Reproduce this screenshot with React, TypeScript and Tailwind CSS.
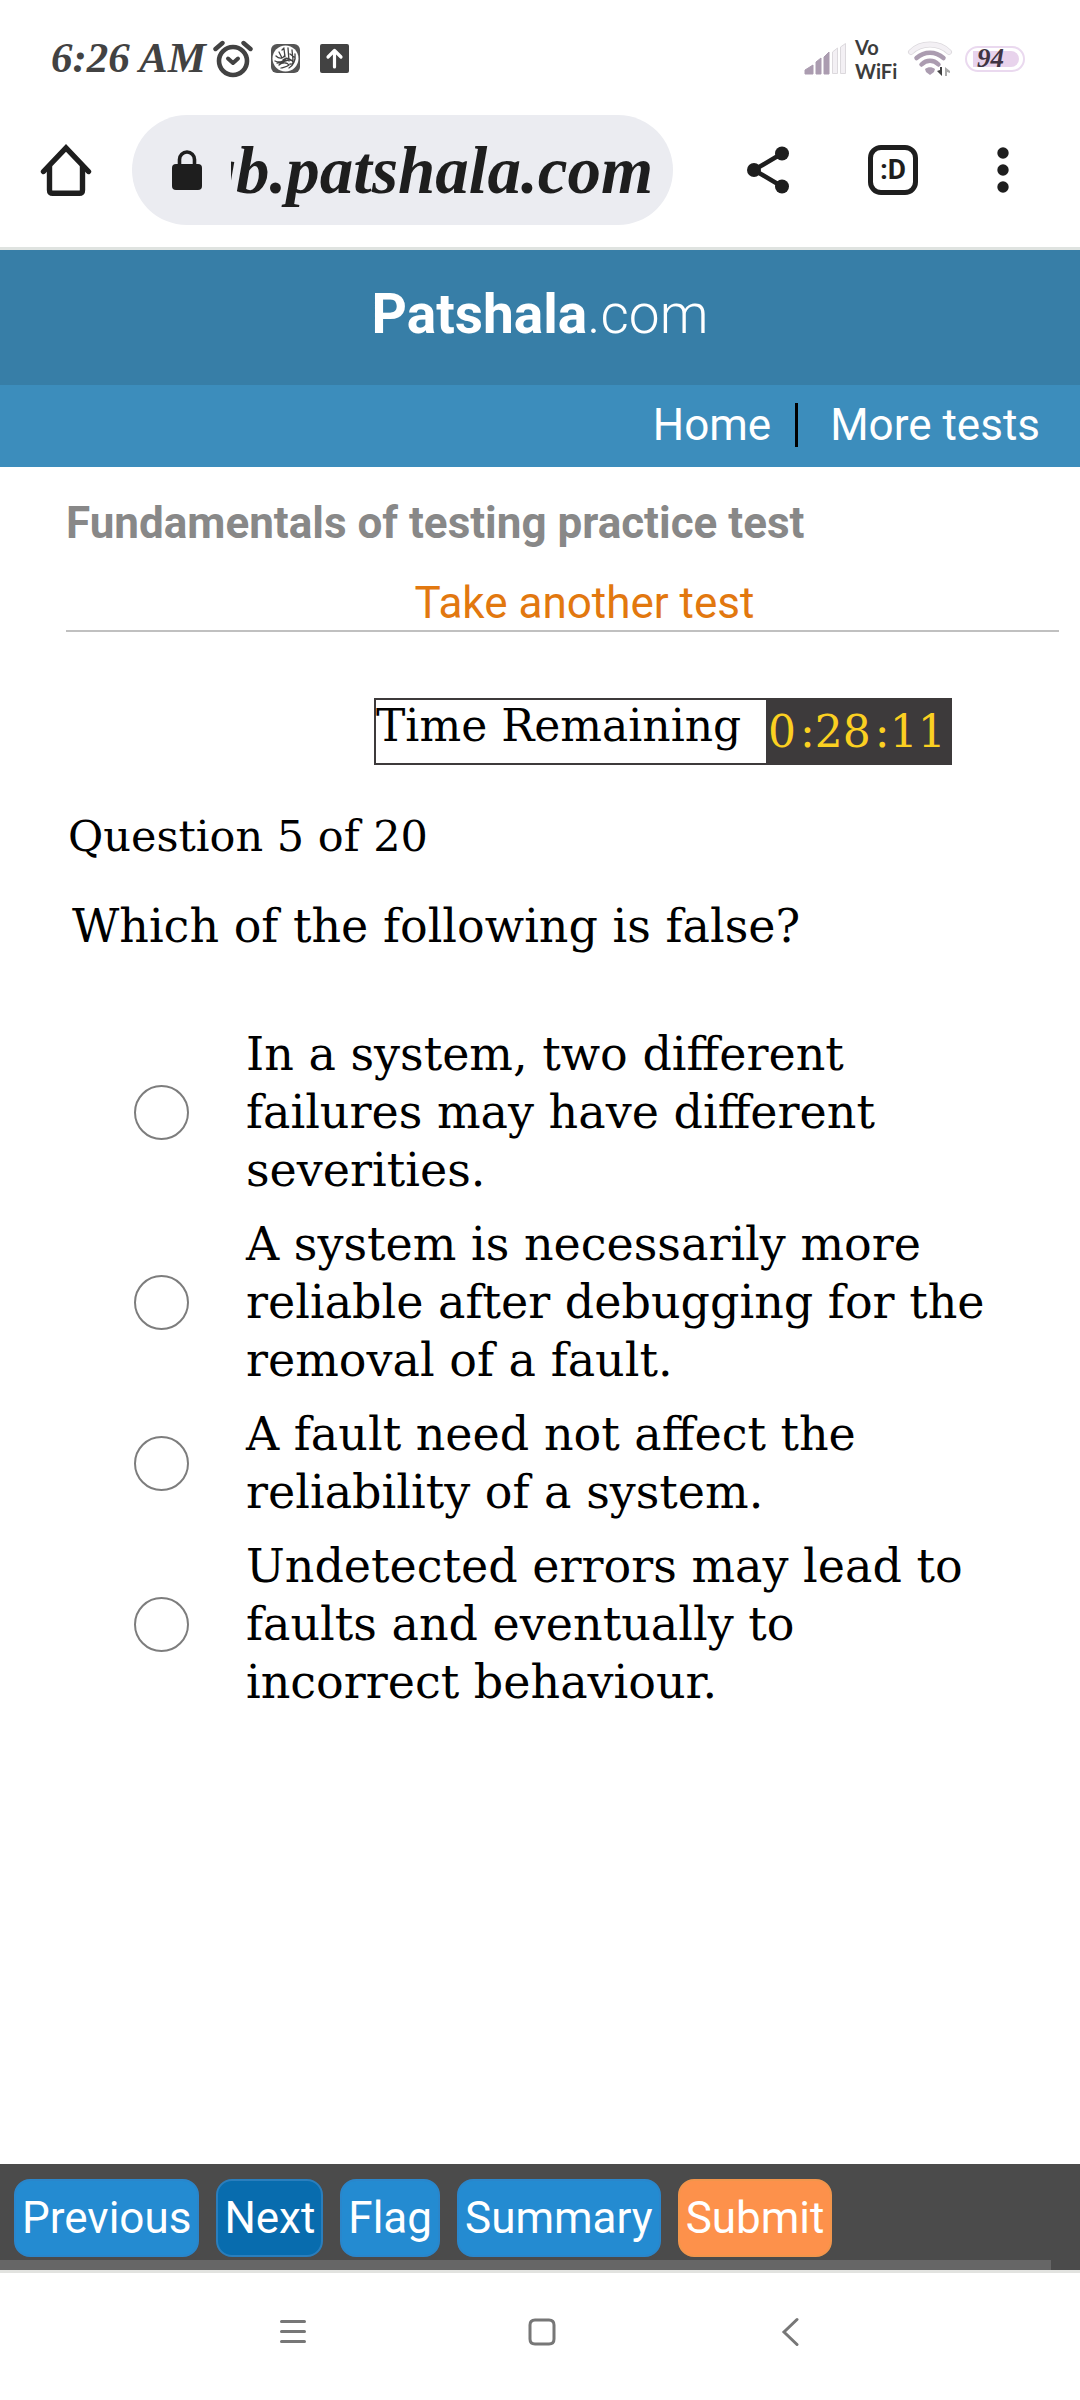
import React from "react";

const options = [
  "In a system, two different failures may have different severities.",
  "A system is necessarily more reliable after debugging for the removal of a fault.",
  "A fault need not affect the reliability of a system.",
  "Undetected errors may lead to faults and eventually to incorrect behaviour.",
];

function StatusBar() {
  return (
    <div className="flex h-[115px] items-center pl-[51px] pr-[55px] pt-0.5 text-[#424242]">
      <span className="w-[162px] whitespace-nowrap font-['Liberation_Serif',serif] text-[43px] font-bold italic">
        6:26 AM
      </span>
      <svg width="40" height="38" viewBox="0 0 40 38" fill="none" stroke="currentColor">
        <circle cx="20" cy="21" r="14" strokeWidth="4.6" />
        <path d="M2.5 9 L9.500 3 M37.5 9 L30.500 3" strokeWidth="4.400" strokeLinecap="round" />
        <path d="M15 18.5 L20 23 L25 18.500" strokeWidth="4" strokeLinecap="round" strokeLinejoin="round" />
      </svg>
      <svg className="ml-[18px]" width="29" height="29" viewBox="0 0 29 29" fill="none" stroke="currentColor">
        <rect width="29" height="29" rx="6" fill="#555" stroke="none" />
        <circle cx="14.500" cy="14.500" r="13" fill="#fff" stroke="none" />
        <path
          d="M4 17c4 2 9 1 12-3M5 12c3 3 7 3 9-1M8 8l3 6M13 5l1 8M17 4l1 13M21 6l1 10M24 10c1 6-2 12-6 14M8 21c3-3 8-3 10 0M10 24c3-1 6-1 8-3M6 19c5 0 9-3 13-3s4 5 0 4M12 16c2-2 6-2 8 0M11 6l2-2M19 10l4 3"
          strokeWidth="1.300"
          strokeLinecap="round"
        />
      </svg>
      <svg className="ml-5" width="29" height="29" viewBox="0 0 29 29">
        <rect width="29" height="29" rx="2" fill="#424242" />
        <path d="M14.500 23V7M8 13l6.500-6.500L21 13" stroke="#fff" strokeWidth="3.200" fill="none" strokeLinecap="round" strokeLinejoin="round" />
      </svg>
      <div className="ml-auto flex items-center">
        <svg width="44" height="34" viewBox="0 0 44 34">
          <path d="M1 32v-4l8-5v9zM12 32V20l5-4v16zM20 32V15l5-5v22z" fill="#ab9cb0" stroke="#ab9cb0" strokeLinejoin="round" />
          <path d="M28.500 31.500V10l5-4v25.500zM36.500 31.500V5l5-3.500v30z" fill="#f3f0f4" stroke="#dcd9dd" />
        </svg>
        <div className="ml-[7px] flex w-[46px] flex-col font-['Lato',sans-serif] text-[20px] font-bold leading-[24px] text-[#3c3c3c]">
          <span>Vo</span>
          <span>WiFi</span>
        </div>
        <svg className="ml-[6px]" width="46" height="38" viewBox="0 0 46 38" fill="none">
          <path d="M4 12c10-10 28-10 38 0" stroke="#dcd9dd" strokeWidth="6" strokeLinecap="round" />
          <path d="M4 12c10-10 28-10 38 0" stroke="#f3f0f4" strokeWidth="4.500" strokeLinecap="round" />
          <path d="M9.500 18c8-7 19-7 27 0M14.500 24.500c5-5 12-5 17 0" stroke="#ab9cb0" strokeWidth="4.500" strokeLinecap="round" />
          <path d="M18 29c3-2.500 7-2.500 10 0l-1 3-4 3-4-3z" fill="#ab9cb0" />
          <path d="M35 27v9l-5-5 3-1v-3z" fill="#424242" />
          <path d="M38 36v-9l5 4v2l-3-1v4z" fill="#aaa" />
        </svg>
        <div className="ml-3 flex h-[26px] w-[60px] items-center rounded-full border-2 border-[#ead9ef] py-1 pl-1.5 pr-1">
          <div className="flex h-4 w-full items-center rounded-r-full bg-[#e8d3ec] pl-1 font-['Liberation_Serif',serif] text-[27px] font-bold italic text-[#3f3442]">
            94
          </div>
        </div>
      </div>
    </div>
  );
}

function BrowserBar() {
  return (
    <div className="flex h-[110px] items-center pl-[40px] pr-[71px] text-[#1e1e1e]">
      <button aria-label="Home page" className="shrink-0">
        <svg width="52" height="54" viewBox="0 0 52 54" fill="none" stroke="currentColor" strokeWidth="5.400">
          <path d="M3.500 28.500 L26 5 L48.500 28.500" strokeLinecap="round" />
          <path d="M9.500 23v24q0 3.300 3.300 3.300h26.400q3.300 0 3.300-3.300V23" />
        </svg>
      </button>
      <div className="ml-10 flex h-full min-w-0 flex-1 items-center rounded-full bg-[#ebecf1] pl-10 pr-[20px]">
        <svg className="shrink-0" width="30" height="41" viewBox="0 0 30 41">
          <rect y="14" width="30" height="26" rx="4" fill="currentColor" />
          <path d="M7.500 16V9.500a7.500 7.500 0 0 1 15 0V16" fill="none" stroke="currentColor" strokeWidth="3.600" />
        </svg>
        <div className="ml-[29px] flex min-w-0 flex-1 justify-end overflow-hidden">
          <input
            aria-label="Address"
            defaultValue="qb.patshala.com"
            className="w-[480px] shrink-0 bg-transparent text-right font-['Liberation_Serif',serif] text-[67px] font-bold italic leading-[80px] outline-none"
          />
        </div>
      </div>
      <button aria-label="Share" className="ml-[74px] shrink-0">
        <svg width="42" height="48" viewBox="0 0 42 48" fill="currentColor">
          <path d="M35 7.500 L7 24 L35 40.500" fill="none" stroke="currentColor" strokeWidth="4.500" />
          <circle cx="7" cy="24" r="7" />
          <circle cx="35" cy="7.500" r="7" />
          <circle cx="35" cy="40.500" r="7" />
        </svg>
      </button>
      <button
        aria-label="Tabs"
        className="ml-[79px] flex size-[50px] shrink-0 items-center justify-center rounded-[13px] border-[5px] border-current font-['Roboto',sans-serif] text-[28px] font-bold"
      >
        :D
      </button>
      <button aria-label="Menu" className="ml-[79px] shrink-0">
        <svg width="12" height="46" viewBox="0 0 12 46" fill="currentColor">
          <circle cx="6" cy="6" r="5.700" />
          <circle cx="6" cy="23" r="5.700" />
          <circle cx="6" cy="40" r="5.700" />
        </svg>
      </button>
    </div>
  );
}

const button = "h-[78px] rounded-2xl border-2 px-1.5";

export default function App() {
  return (
    <div className="flex min-h-screen flex-col bg-white">
      <StatusBar />
      <BrowserBar />
      <header className="mt-[22px] border-t-[3px] border-[#dfe3e0] font-['Roboto',sans-serif] text-white">
        <div className="flex h-[135px] justify-center bg-[#377ea7] pt-[30px] text-[55px] leading-[68px]">
          <a href="#home">
            <b className="font-bold">Patshala</b>
            <span className="font-light">.com</span>
          </a>
        </div>
        <nav className="flex h-[82px] items-start justify-end bg-[#3c8dbc] pr-[40px] pt-[18px] text-[44px]">
          <a href="#home" className="border-r-[3px] border-black pr-6 leading-[44px]">
            Home
          </a>
          <a href="#tests" className="pl-8 leading-[44px]">
            More tests
          </a>
        </nav>
      </header>

      <main className="flex-1 pl-[66px] pr-[21px] font-['DejaVu_Serif',serif] text-[46px] leading-[58px] text-black">
        <div className="border-b-2 border-[#c0c0c0] pt-[26px] font-['Roboto',sans-serif] text-[44px]">
          <h1 className="font-bold leading-[60px] text-[#888]">Fundamentals of testing practice test</h1>
          <div className="mt-[23px] pl-[44px] text-center leading-[54px] text-[#e2780f]">
            <a href="#another">Take another test</a>
          </div>
        </div>

        <div className="mt-[66px] flex justify-end pr-[107px]">
          <div className="flex h-[67px] w-[578px] border-2 border-[#3d3a3b] bg-[#3d3a3b]">
            <span className="w-[390px] shrink-0 whitespace-nowrap bg-white text-[44px] leading-[52px]">Time Remaining</span>
            <span className="flex flex-1 items-center pl-0.5 text-[44px] text-[#fbd021]">
              0<span className="ml-1">:28</span>
              <span className="ml-1">:11</span>
            </span>
          </div>
        </div>

        <p className="mt-[42px] pl-0.5 text-[43px]">Question 5 of 20</p>
        <form>
          <fieldset>
            <legend className="pl-1.5 pt-8">Which of the following is false?</legend>
            <div className="mt-[70px] flex flex-col gap-4 pl-[68px] pr-[50px]">
              {options.map((o) => (
                <label key={o} className="flex items-center gap-[57px]">
                  <input
                    type="radio"
                    name="answer"
                    className="size-[55px] shrink-0 appearance-none rounded-full border-2 border-[#7d7d7d] checked:border-[16px]"
                  />
                  <span>{o}</span>
                </label>
              ))}
            </div>
          </fieldset>
        </form>
      </main>

      <footer>
        <div className="bg-[#4b4b4b] font-['Roboto',sans-serif] text-[44px] text-white">
          <div className="flex gap-[17px] px-3.5 pb-[3px] pt-[15px]">
            <button className={button + " border-[#2a86cb] bg-[#248bd1]"}>Previous</button>
            <button className={button + " border-[#2a7ebd] bg-[#086cae]"}>Next</button>
            <button className={button + " border-[#2a86cb] bg-[#248bd1]"}>Flag</button>
            <button className={button + " border-[#2a86cb] bg-[#248bd1]"}>Summary</button>
            <button className={button + " border-[#f2954b] bg-[#fd914b]"}>Submit</button>
          </div>
          <div className="mr-[29px] h-2.5 bg-[#666]" />
        </div>
        <div className="flex h-[130px] items-start justify-between border-t-[3px] border-[#e2e3e0] pl-[278px] pr-[275px] pt-[44px] text-[#777]">
          <button aria-label="Recent apps" className="flex w-[30px] justify-center">
            <svg width="28" height="30" viewBox="0 0 28 30" stroke="currentColor" strokeWidth="3" strokeLinecap="round">
              <path d="M2.500 4.500h23M2.500 14.500h23M2.500 24.500h23" />
            </svg>
          </button>
          <button aria-label="Home screen" className="flex w-[30px] justify-center">
            <svg width="30" height="30" viewBox="0 0 30 30" fill="none" stroke="currentColor" strokeWidth="3">
              <path d="M8 3h14q5 0 5 5v14q0 5-5 5H8q-5 0-5-5V8q0-5 5-5z" />
            </svg>
          </button>
          <button aria-label="Back" className="flex w-[30px] justify-center">
            <svg width="18" height="30" viewBox="0 0 18 30" fill="none" stroke="currentColor" strokeWidth="3" strokeLinecap="round">
              <path d="M16 2.500 L3 15 L16 27.500" />
            </svg>
          </button>
        </div>
      </footer>
    </div>
  );
}
